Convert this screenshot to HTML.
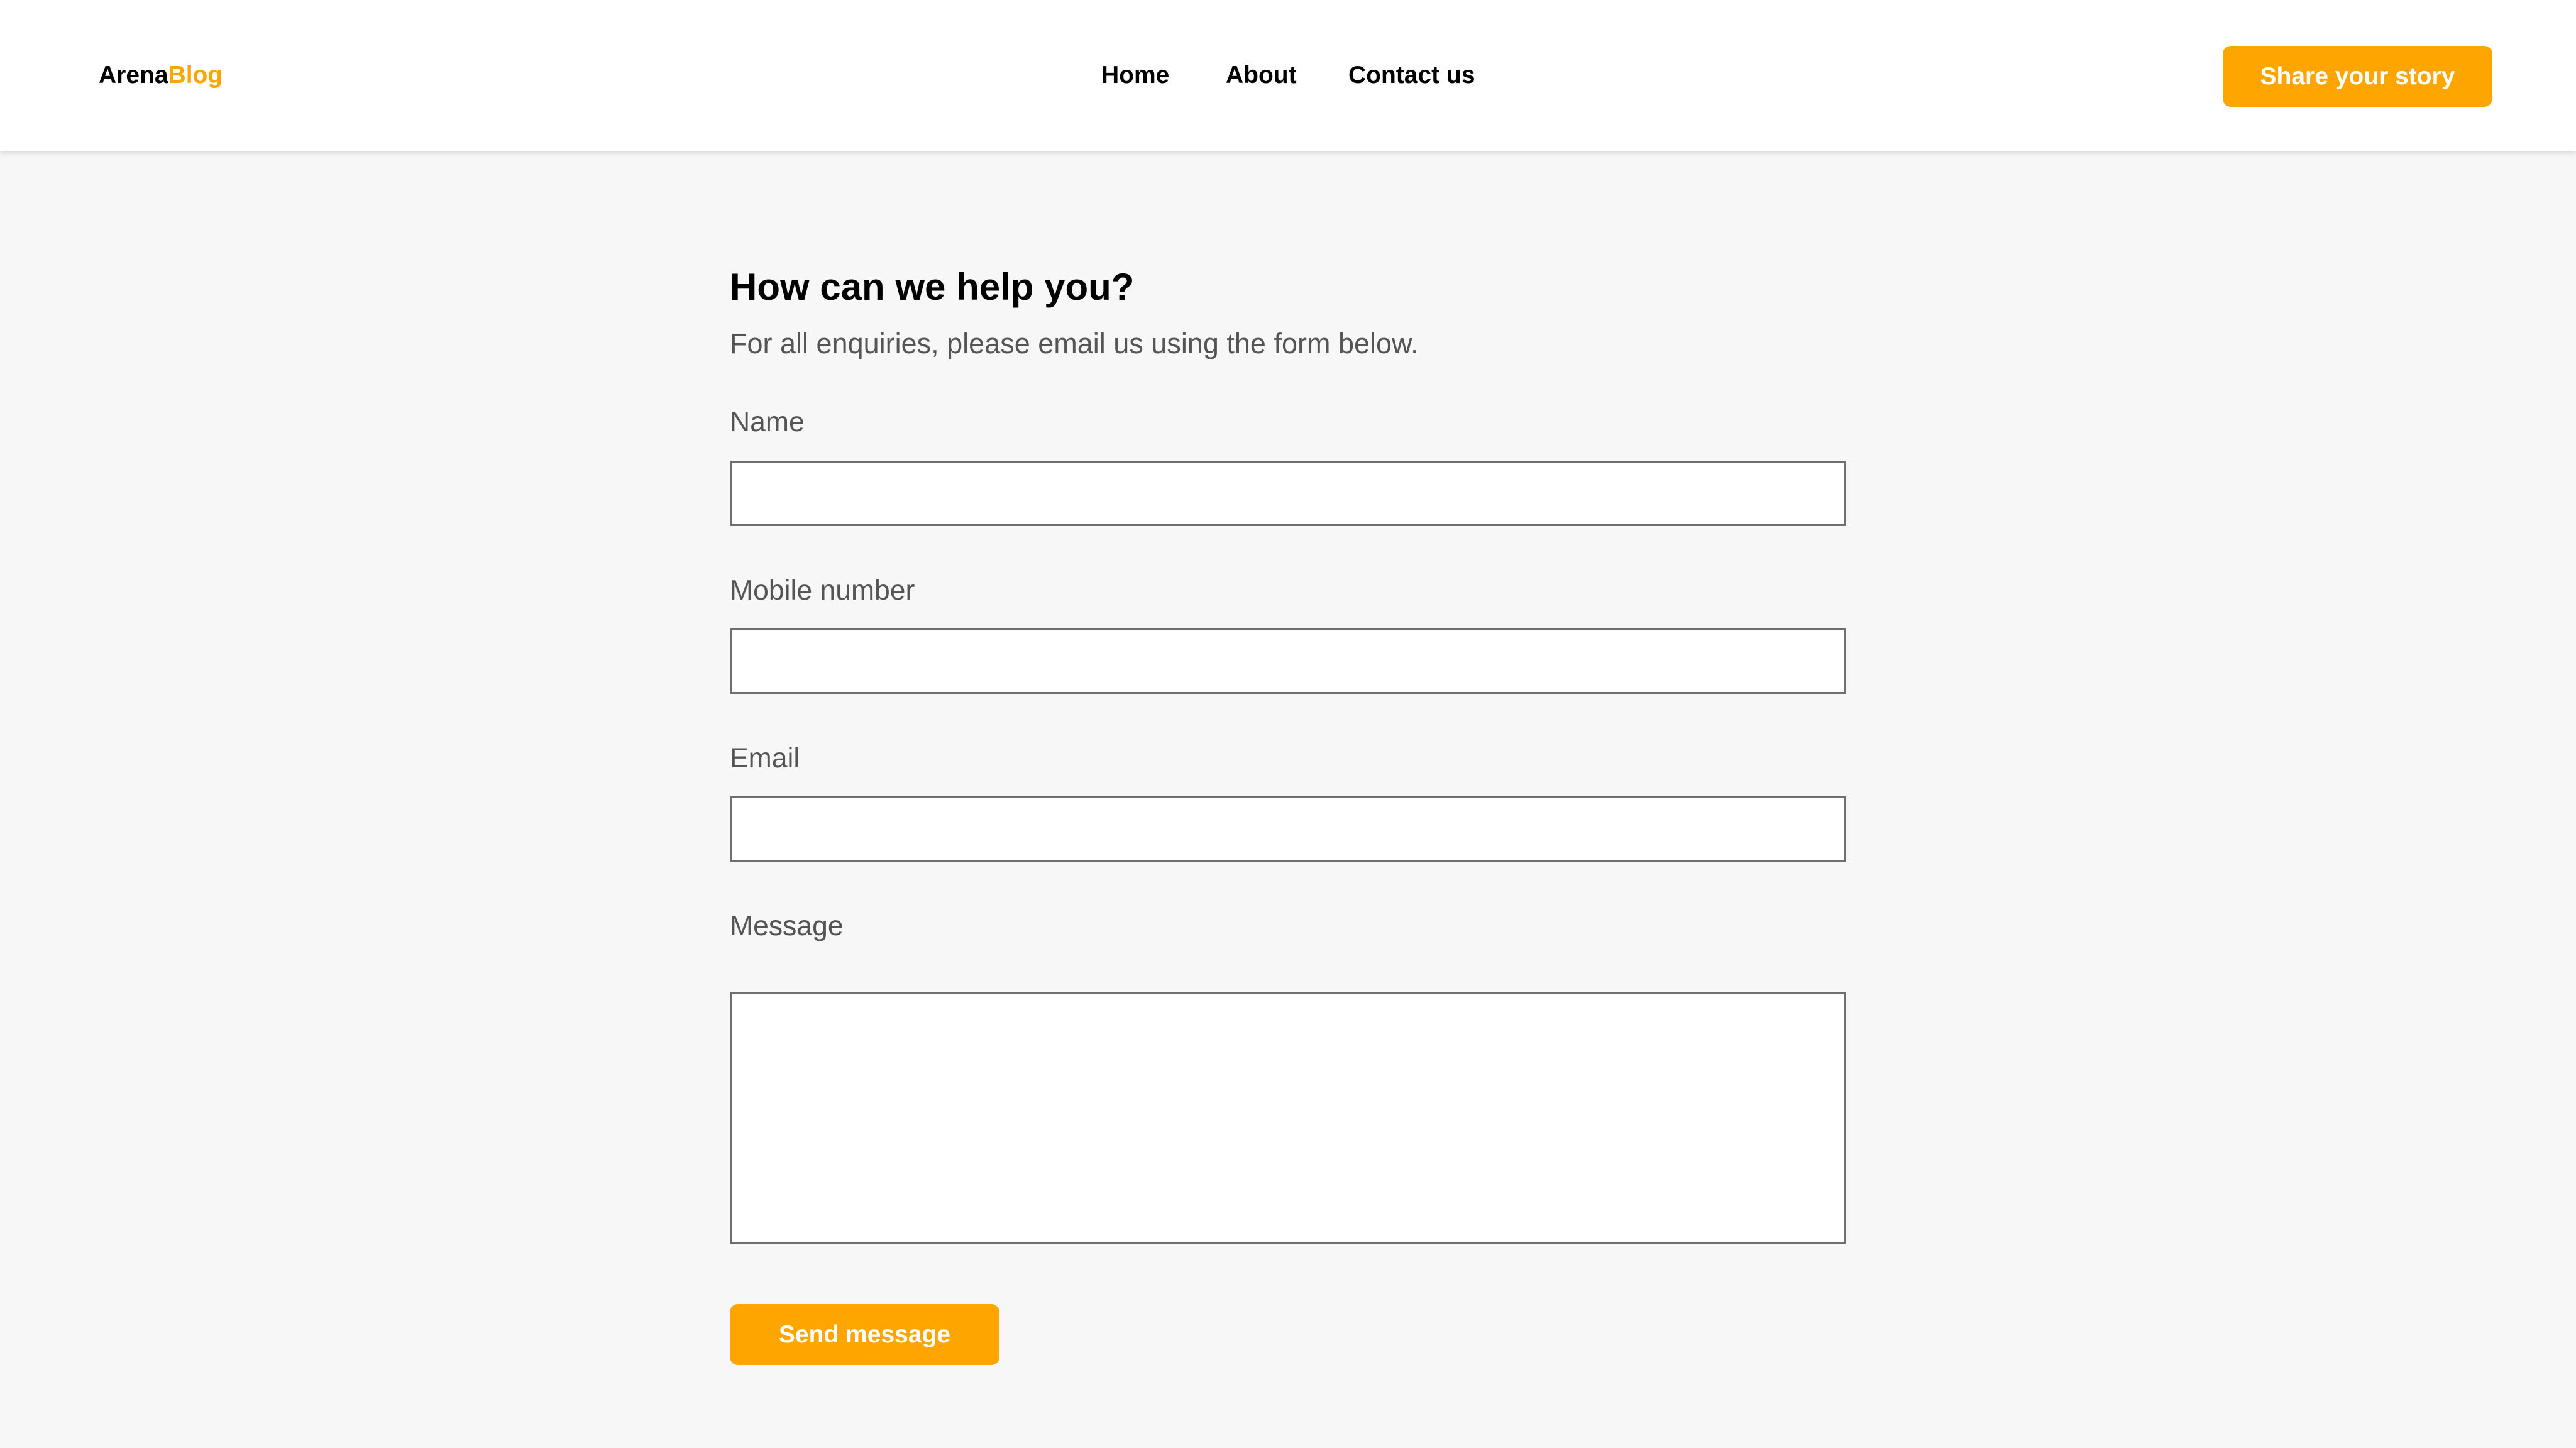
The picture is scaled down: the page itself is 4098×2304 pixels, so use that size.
<!DOCTYPE html>
<html><head><style>
*{margin:0;padding:0;box-sizing:border-box}
body{width:4098px;height:2304px;background:#f7f7f7;font-family:"Liberation Sans",Arial,sans-serif;position:relative;overflow:hidden}
.hdr{position:absolute;left:0;top:0;width:4098px;height:240px;background:#fff;box-shadow:0 3px 8px rgba(0,0,0,0.15)}
.t{position:absolute;white-space:nowrap;line-height:1}
.nav{font-weight:bold;font-size:39px;color:#000}
.btn{position:absolute;background:#ffa500;border-radius:13px;color:#fff;font-weight:bold;font-size:39px;display:flex;align-items:center;justify-content:center}
.lbl{font-size:44.5px;color:#555}
.inp{position:absolute;left:1161px;width:1776px;background:#fff;border:3px solid #6f6f6f}
</style></head><body>
<div class="hdr">
<div class="t nav" style="left:157px;top:100px">Arena<span style="color:#ffa500">Blog</span></div>
<div class="t nav" style="left:1752px;top:100px">Home</div>
<div class="t nav" style="left:1950px;top:100px">About</div>
<div class="t nav" style="left:2145px;top:100px">Contact us</div>
<div class="btn" style="left:3536px;top:73px;width:429px;height:97px">Share your story</div>
</div>
<div class="t" style="left:1161px;top:427px;font-size:60px;font-weight:bold;color:#000">How can we help you?</div>
<div class="t" style="left:1161px;top:524px;font-size:45px;color:#555">For all enquiries, please email us using the form below.</div>
<div class="t lbl" style="left:1161px;top:650px">Name</div>
<div class="inp" style="top:733px;height:104px"></div>
<div class="t lbl" style="left:1161px;top:918px">Mobile number</div>
<div class="inp" style="top:1000px;height:104px"></div>
<div class="t lbl" style="left:1161px;top:1185px">Email</div>
<div class="inp" style="top:1267px;height:104px"></div>
<div class="t lbl" style="left:1161px;top:1452px">Message</div>
<div class="inp" style="top:1578px;height:402px"></div>
<div class="btn" style="left:1161px;top:2075px;width:429px;height:97px">Send message</div>
</body></html>
